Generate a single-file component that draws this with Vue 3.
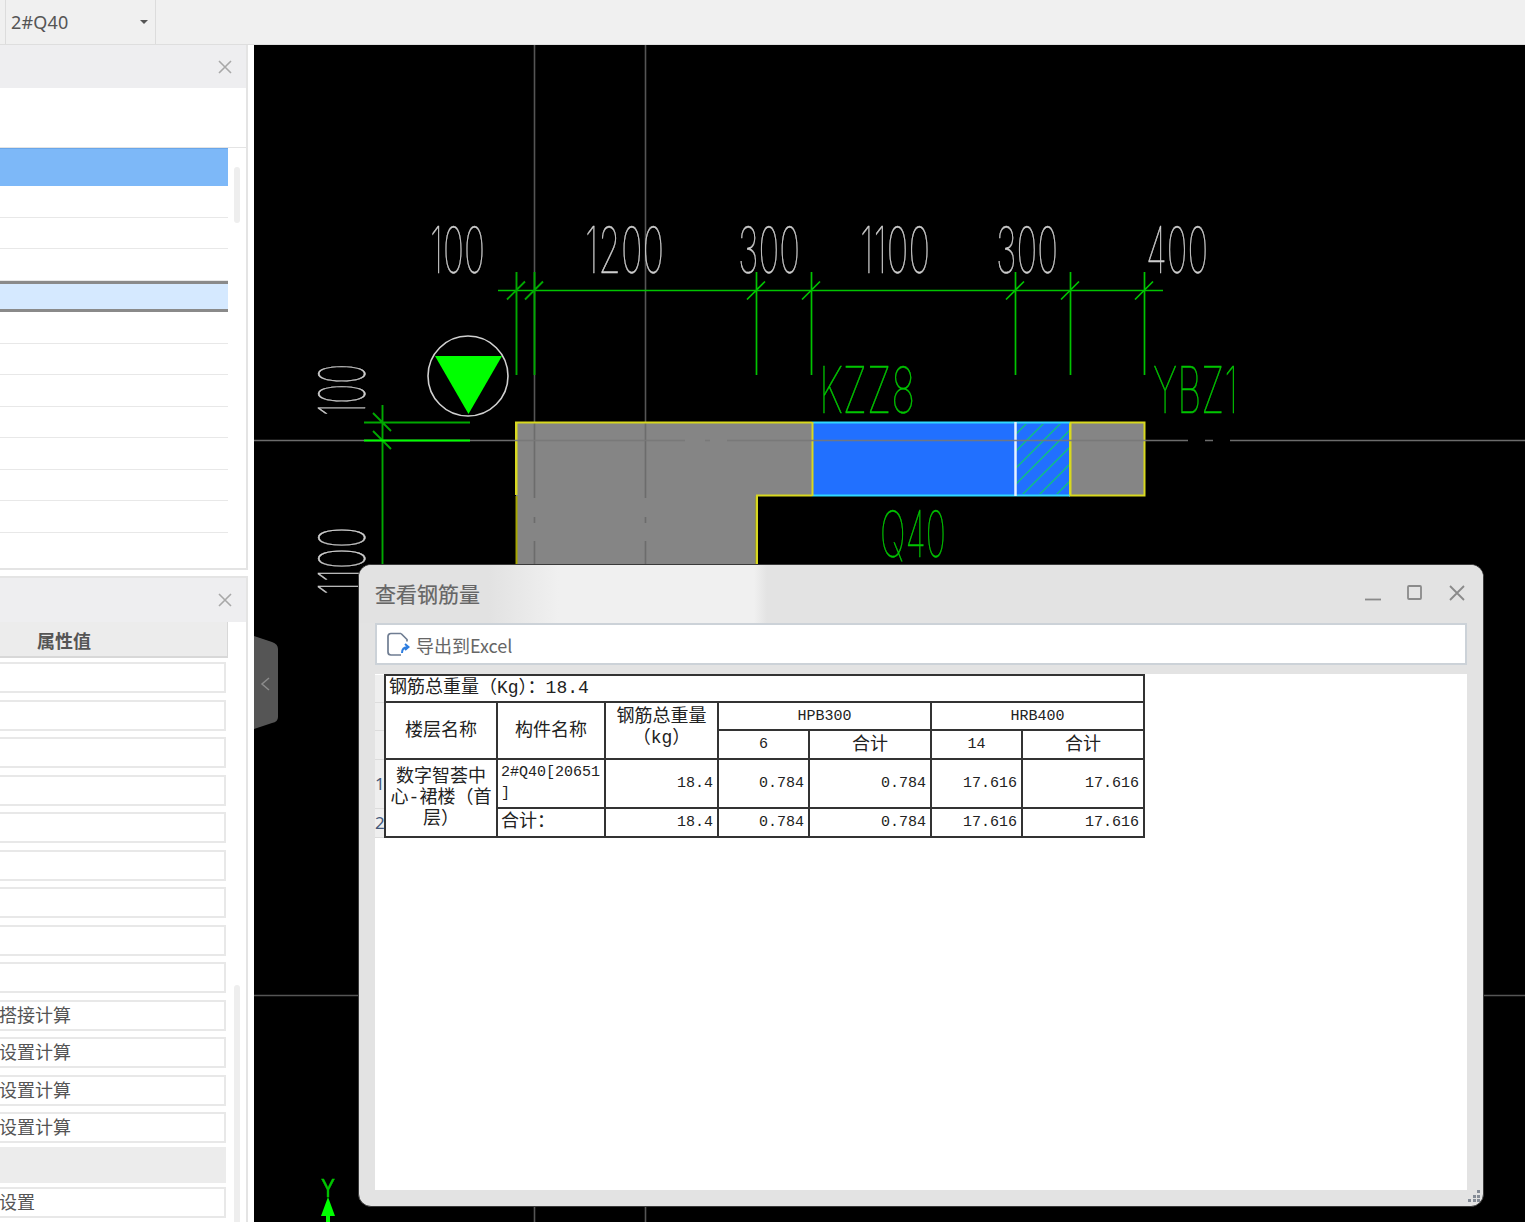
<template>
  <div class="app">
    <!-- Top toolbar -->
    <header class="topbar">
      <div class="combo">
        <span class="combo-text">2#Q40</span>
        <span class="combo-caret"></span>
      </div>
    </header>

    <div class="main">
      <!-- Left panels -->
      <aside class="sidebar">
        <section class="panel panel-list">
          <div class="panel-head">
            <svg class="close-icon" width="14" height="14" viewBox="0 0 14 14"><path d="M1 1l12 12M13 1L1 13" /></svg>
          </div>
          <div class="panel-blank"></div>
          <div class="panel-scroll">
            <div class="list">
              <div class="list-active"></div>
              <div v-for="n in 11" :key="n" class="list-row" :class="{ selected: n === 4 }"></div>
            </div>
            <div class="thumb thumb-top"></div>
          </div>
        </section>

        <section class="panel panel-props">
          <div class="panel-head panel-head-props">
            <svg class="close-icon" width="14" height="14" viewBox="0 0 14 14"><path d="M1 1l12 12M13 1L1 13" /></svg>
          </div>
          <div class="panel-scroll">
            <div class="props">
              <div class="props-head"><span>属性值</span></div>
              <div class="props-rows">
                <div v-for="(row, i) in propRows" :key="i" class="prop" :class="{ disabled: row === null }">{{ row }}</div>
              </div>
            </div>
            <div class="thumb thumb-bottom"></div>
          </div>
        </section>
      </aside>

      <!-- CAD drawing -->
      <svg class="cad" viewBox="254 45 1271 1177" width="1271" height="1177">
        <g class="axis">
          <path d="M534.5 45V422M534.5 570V1222M645.5 45V422M645.5 570V1222" />
          <path d="M254 995.5H1525" />
        </g>

        <path class="wall" d="M516 422H1145V496H757V570H516Z" />
        <rect x="812" y="422" width="258" height="74" fill="#2170ff" />
        <g clip-path="url(#hatch-clip)">
          <path v-for="x in hatch" :key="x" class="hatch" :d="`M${x} 422l-74 74`" />
        </g>
        <path class="axis-wall" d="M534.5 422V498M534.5 517v6M534.5 541V570M645.5 422V498M645.5 517v6M645.5 541V570" />

        <path class="edge-dark" d="M516.5 496V570M756.5 496V570" />
        <path class="edge" d="M516 495V422.5H812M1070 422.5H1144.5V495.5H1070V422.5M812 495.5H757V570M516.5 422V495" />
        <path class="edge-blue" d="M812 422.5H1070M812 495.5H1070" />
        <path class="edge" d="M812.5 422V496M1070.5 422V496" />
        <path class="edge-white" d="M1015.5 422V496" />

        <path class="grid-h" d="M254 440.5H685M705 440.5h5M727 440.5H1188M1205 440.5h8M1230 440.5H1525" />

        <!-- dimension lines -->
        <path class="dim" d="M498 290.5H1163" />
        <path
          v-for="x in dimX"
          :key="x"
          class="dim"
          :class="{ 'dim-dark': x < 540 }"
          :d="`M${x + 0.5} 272V375M${x - 9} 299.5L${x + 9} 281.5`"
        />
        <path class="dim-dark" d="M382.5 405V600M364 422.5H470M373 413l18 18M373 431l18 18" />
        <path class="dim-bright" d="M364 440.5H470" />

        <circle class="marker" cx="468" cy="376" r="40" />
        <path d="M435 356H502L468.5 414Z" fill="#00ff00" />

        <g class="cad-labels">
          <text
            v-for="t in labels"
            :key="t.text + t.x"
            class="cad-text"
            :class="t.cls"
            :x="t.x"
            :y="t.y"
            :textLength="t.w"
            lengthAdjust="spacingAndGlyphs"
            :transform="t.rot ? `rotate(-90 ${t.x} ${t.y})` : null"
          >{{ t.text }}</text>
          <text class="cad-text green axis-y" x="321" y="1197" textLength="14" lengthAdjust="spacingAndGlyphs">Y</text>
        </g>
        <path d="M328 1197L321 1216H326V1222H330V1216H335Z" fill="#00ff00" />

        <!-- collapse handle -->
        <path d="M254 636L272 642Q278 644 278 649V717Q278 722 272 723L254 729Z" fill="#555" />
        <path d="M269 678l-7 6 7 6" fill="none" stroke="#8c8c8c" stroke-width="1.5" />

        <defs>
          <clipPath id="hatch-clip"><rect x="1016" y="424" width="54" height="70" /></clipPath>
        </defs>
      </svg>
    </div>

    <!-- Rebar dialog -->
    <div class="dialog">
      <div class="dialog-title">
        <span class="dialog-name">查看钢筋量</span>
        <div class="win-btns">
          <svg width="16" height="16" viewBox="0 0 16 16"><path d="M0 14.5H16" /></svg>
          <svg width="16" height="16" viewBox="0 0 16 16"><rect x="1" y="1" width="13" height="13" rx="1" /></svg>
          <svg width="16" height="16" viewBox="0 0 16 16"><path d="M1 1l14 14M15 1L1 15" /></svg>
        </div>
      </div>

      <div class="dialog-tools">
        <svg class="export-icon" width="24" height="24" viewBox="0 0 24 24">
          <path class="doc" d="M15 1.5H5a3 3 0 0 0-3 3V20a3 3 0 0 0 3 3h10M15 1.5l6 6v2" />
          <path class="arrow" d="M16 21c0-4 2-6 6-6M19 12l3.5 3-3.5 3" />
        </svg>
        <span class="tool-label">导出到Excel</span>
      </div>

      <div class="dialog-body">
        <table class="sheet">
          <colgroup>
            <col v-for="w in colWidths" :key="w.id" :style="{ width: w.px + 'px' }" />
          </colgroup>
          <tbody>
            <tr class="r1">
              <td class="rh"></td>
              <td class="c left" colspan="7">钢筋总重量（Kg）：18.4</td>
            </tr>
            <tr class="r2">
              <td class="rh"></td>
              <td class="c mid" rowspan="2"><span class="up">楼层名称</span></td>
              <td class="c mid" rowspan="2"><span class="up">构件名称</span></td>
              <td class="c mid lh" rowspan="2"><span class="up">钢筋总重量<br />（kg）</span></td>
              <td class="c mid latin" colspan="2">HPB300</td>
              <td class="c mid latin" colspan="2">HRB400</td>
            </tr>
            <tr class="r3">
              <td class="rh"></td>
              <td class="c mid latin">6</td>
              <td class="c mid"><span class="up">合计</span></td>
              <td class="c mid latin">14</td>
              <td class="c mid"><span class="up">合计</span></td>
            </tr>
            <tr class="r4">
              <td class="rh">1</td>
              <td class="c mid floor" rowspan="2">数字智荟中<br />心-裙楼（首<br />层）</td>
              <td class="c left part">2#Q40[20651<br />]</td>
              <td v-for="(v, i) in values" :key="i" class="c num">{{ v }}</td>
            </tr>
            <tr class="r5">
              <td class="rh">2</td>
              <td class="c left">合计：</td>
              <td v-for="(v, i) in values" :key="i" class="c num">{{ v }}</td>
            </tr>
          </tbody>
        </table>
      </div>

      <svg class="grip" width="12" height="13" viewBox="0 0 12 13">
        <rect v-for="d in gripDots" :key="d[0] + '-' + d[1]" :x="d[0]" :y="d[1]" width="3" height="3" />
      </svg>
    </div>
  </div>
</template>

<script setup>
const propRows = [
  '', '', '', '', '', '', '', '', '',
  '搭接计算', '设置计算', '设置计算', '设置计算',
  null,
  '设置'
]

const dimX = [516, 534, 756, 811, 1015, 1070, 1144]

// hatch lines, x where each one meets the top edge of the wall
const hatch = [1028, 1045, 1062, 1078, 1095, 1112, 1129]

const labels = [
  { text: '100', x: 430, y: 273, w: 55, cls: 'white' },
  { text: '1200', x: 585, y: 273, w: 79, cls: 'white' },
  { text: '300', x: 738, y: 273, w: 62, cls: 'white' },
  { text: '1100', x: 860, y: 273, w: 70, cls: 'white' },
  { text: '300', x: 996, y: 273, w: 62, cls: 'white' },
  { text: '400', x: 1146, y: 273, w: 62, cls: 'white' },
  { text: '100', x: 365, y: 416, w: 52, cls: 'white', rot: true },
  { text: '1100', x: 365, y: 595, w: 68, cls: 'white', rot: true },
  { text: 'KZZ8', x: 819, y: 413, w: 96, cls: 'green' },
  { text: 'YBZ1', x: 1153, y: 413, w: 85, cls: 'green' },
  { text: 'Q40', x: 880, y: 557, w: 66, cls: 'green' }
]

const colWidths = [10, 112, 108, 113, 91, 122, 91, 122].map((px, id) => ({ id, px }))

const values = ['18.4', '0.784', '0.784', '17.616', '17.616']

const gripDots = [
  [9, 0],
  [5, 5], [9, 5],
  [0, 9], [5, 9], [9, 9]
]
</script>

<style scoped>
.app {
  position: relative;
  display: flex;
  flex-direction: column;
  width: 1525px;
  height: 1222px;
  overflow: hidden;
  background: #fff;
  font-family: "Noto Sans CJK SC", "Noto Sans", sans-serif;
  color: #555;
}

/* Top toolbar */
.topbar {
  flex: 0 0 45px;
  box-sizing: border-box;
  display: flex;
  padding-left: 5px;
  background: #f0f0f0;
  border-bottom: 1px solid #dedede;
}
.combo {
  display: flex;
  align-items: center;
  justify-content: space-between;
  width: 151px;
  box-sizing: border-box;
  padding: 0 7px 0 5px;
  border-left: 1px solid #dcdcdc;
  border-right: 1px solid #dcdcdc;
}
.combo-text {
  font-family: "Noto Sans", sans-serif;
  font-size: 18px;
  letter-spacing: 0.2px;
}
.combo-caret {
  width: 0;
  height: 0;
  border-left: 4px solid transparent;
  border-right: 4px solid transparent;
  border-top: 4px solid #555;
}

.main {
  flex: 1;
  display: flex;
  min-height: 0;
}

/* Sidebar */
.sidebar {
  flex: 0 0 254px;
  display: flex;
  flex-direction: column;
  gap: 6px;
  background: #fff;
}
.panel {
  width: 248px;
  box-sizing: border-box;
  border-right: 2px solid #e4e4e4;
  display: flex;
  flex-direction: column;
}
.panel-list {
  height: 525px;
  border-bottom: 2px solid #e4e4e4;
}
.panel-props {
  flex: 1;
  min-height: 0;
  border-top: 2px solid #e4e4e4;
}
.panel-head {
  flex: 0 0 43px;
  display: flex;
  align-items: center;
  justify-content: flex-end;
  padding-right: 14px;
  background: #eeeef0;
}
.panel-head-props {
  flex-basis: 44px;
}
.close-icon path {
  fill: none;
  stroke: #a8a8a8;
  stroke-width: 1.6;
}
.panel-blank {
  flex: 0 0 60px;
  box-sizing: border-box;
  border-bottom: 1px solid #e4e4e4;
}
.panel-scroll {
  flex: 1;
  display: flex;
  min-height: 0;
}
.list {
  width: 228px;
}
.list-active {
  height: 38px;
  box-sizing: border-box;
  background: #7db8f8;
  border-top: 1px solid #6aa6e8;
}
.list-row {
  height: 31.5px;
  box-sizing: border-box;
  border-bottom: 1px solid #e8e8e8;
}
.list-row.selected {
  background: #d5e9ff;
  border-top: 3px solid #8a8a8a;
  border-bottom: 3px solid #8a8a8a;
}
.thumb {
  width: 6px;
  margin-left: 6px;
  background: #eeeeee;
  border-radius: 3px;
}
.thumb-top {
  height: 56px;
  margin-top: 19px;
}
.thumb-bottom {
  height: 300px;
  margin-top: 363px;
}

/* Property table */
.props {
  width: 228px;
}
.props-head {
  height: 36px;
  box-sizing: border-box;
  display: flex;
  align-items: center;
  padding-left: 37px;
  background: #ececec;
  border-bottom: 2px solid #d8d8d8;
  border-right: 1px solid #d8d8d8;
  font-size: 18px;
  font-weight: 700;
}
.props-head span {
  margin-top: 2px;
}
.props-rows {
  display: flex;
  flex-direction: column;
  gap: 6.5px;
  padding-top: 4px;
}
.prop {
  width: 226px;
  height: 31px;
  box-sizing: border-box;
  border: 2px solid #e8e8e8;
  border-left: 0;
  font-size: 18px;
  line-height: 24px;
  text-indent: -1px;
  white-space: nowrap;
  overflow: hidden;
}
.prop.disabled {
  height: 36px;
  margin: -3px 0 -2px;
  background: #ececec;
  border-color: #ececec;
}

/* CAD drawing */
.cad {
  flex: 0 0 1271px;
  display: block;
  background: #000;
}
.axis path {
  fill: none;
  stroke: #555;
  stroke-width: 1.6;
}
.axis-wall {
  fill: none;
  stroke: #6c6c6c;
  stroke-width: 1.6;
}
.wall {
  fill: #858585;
}
.hatch {
  fill: none;
  stroke: #10c080;
  stroke-width: 1.4;
}
.edge {
  fill: none;
  stroke: #d8d820;
  stroke-width: 2;
}
.edge-dark {
  fill: none;
  stroke: #a6a600;
  stroke-width: 2;
}
.edge-blue {
  fill: none;
  stroke: #30d8ff;
  stroke-width: 2;
}
.edge-white {
  fill: none;
  stroke: #e8f2ff;
  stroke-width: 2.5;
}
.grid-h {
  fill: none;
  stroke: rgba(120, 120, 120, 0.9);
  stroke-width: 1.4;
}
.dim {
  fill: none;
  stroke: #00c400;
  stroke-width: 1.7;
}
.dim-dark {
  fill: none;
  stroke: #00a800;
  stroke-width: 1.9;
}
.dim-bright {
  fill: none;
  stroke: #00ff00;
  stroke-width: 1.8;
}
.marker {
  fill: none;
  stroke: #d0d0d0;
  stroke-width: 1.6;
}
.cad-labels {
  opacity: 0.99;
}
.cad-text {
  font-family: Inter, Roboto, sans-serif;
  font-weight: 100;
  font-size: 64px;
  stroke-width: 0.5px;
}
.cad-text.white {
  fill: #d0d0d0;
  stroke: #d0d0d0;
}
.cad-text.green {
  fill: #00c800;
  stroke: #00c800;
}
.axis-y {
  font-size: 24px;
  font-weight: 400;
}

/* Dialog */
.dialog {
  position: absolute;
  left: 358px;
  top: 564px;
  width: 1126px;
  height: 643px;
  box-sizing: border-box;
  display: flex;
  flex-direction: column;
  padding: 0 16px 16px;
  background: #e3e3e3;
  border: 1px solid #3a3a3a;
  border-radius: 13px;
}
.dialog-title {
  flex: 0 0 58px;
  margin: 0 -16px;
  padding: 0 18px 0 16px;
  display: flex;
  align-items: center;
  justify-content: space-between;
  border-radius: 12px 12px 0 0;
  background: linear-gradient(90deg, #e2e2e2 130px, #f0f0f0 200px, #f0f0f0 395px, #e3e3e3 408px);
}
.dialog-name {
  font-size: 21px;
  line-height: 24px;
  margin-top: -3px;
  color: #666;
  -webkit-text-stroke: 0.2px #666;
}
.win-btns {
  display: flex;
  gap: 26px;
}
.win-btns svg {
  margin-top: -3px;
}
.win-btns path,
.win-btns rect {
  fill: none;
  stroke: #8a8a8a;
  stroke-width: 1.8;
}
.dialog-tools {
  flex: 0 0 42px;
  box-sizing: border-box;
  display: flex;
  align-items: center;
  gap: 6px;
  padding-left: 9px;
  background: #fff;
  border: 2px solid #ccd2d8;
  font-size: 18px;
  color: #666;
}
.tool-label {
  margin-top: 1px;
}
.export-icon .doc {
  fill: none;
  stroke: #6f7d92;
  stroke-width: 1.7;
}
.export-icon .arrow {
  fill: none;
  stroke: #2d7de0;
  stroke-width: 2;
}
.dialog-body {
  flex: 1;
  margin-top: 9px;
  background: #fff;
  min-height: 0;
}

/* Rebar table */
.sheet {
  table-layout: fixed;
  width: 769px;
  border-collapse: collapse;
  font-family: "Liberation Mono", "Noto Sans CJK SC", monospace;
  font-size: 15px;
  color: #222;
}
.sheet td {
  padding: 0;
  overflow: hidden;
}
.sheet .r1 { height: 27px; }
.sheet .r2 { height: 28px; }
.sheet .r3 { height: 29px; }
.sheet .r4 { height: 49px; }
.sheet .r5 { height: 29px; }
.sheet .rh {
  background: #efefef;
  border-bottom: 1px solid #dcdcdc;
  font-family: "Noto Sans", sans-serif;
  font-size: 17px;
  color: #44587a;
  text-align: center;
}
.sheet .c {
  border: 2px solid #333;
}
.sheet .left {
  padding-left: 3px;
  font-size: 18px;
  line-height: 21px;
}
.sheet .mid {
  text-align: center;
  font-size: 18px;
}
.sheet .mid.latin {
  font-size: 15px;
}
.sheet .up {
  position: relative;
  top: -3px;
}
.sheet .lh {
  line-height: 21px;
}
.sheet .part {
  font-size: 15px;
  line-height: 21px;
  vertical-align: top;
  padding-top: 2px;
}
.sheet .floor {
  line-height: 21px;
  white-space: nowrap;
}
.sheet .num {
  padding-right: 4px;
  text-align: right;
}
.grip {
  position: absolute;
  right: 3px;
  bottom: 3px;
}
.grip rect {
  fill: #858c96;
}
</style>
